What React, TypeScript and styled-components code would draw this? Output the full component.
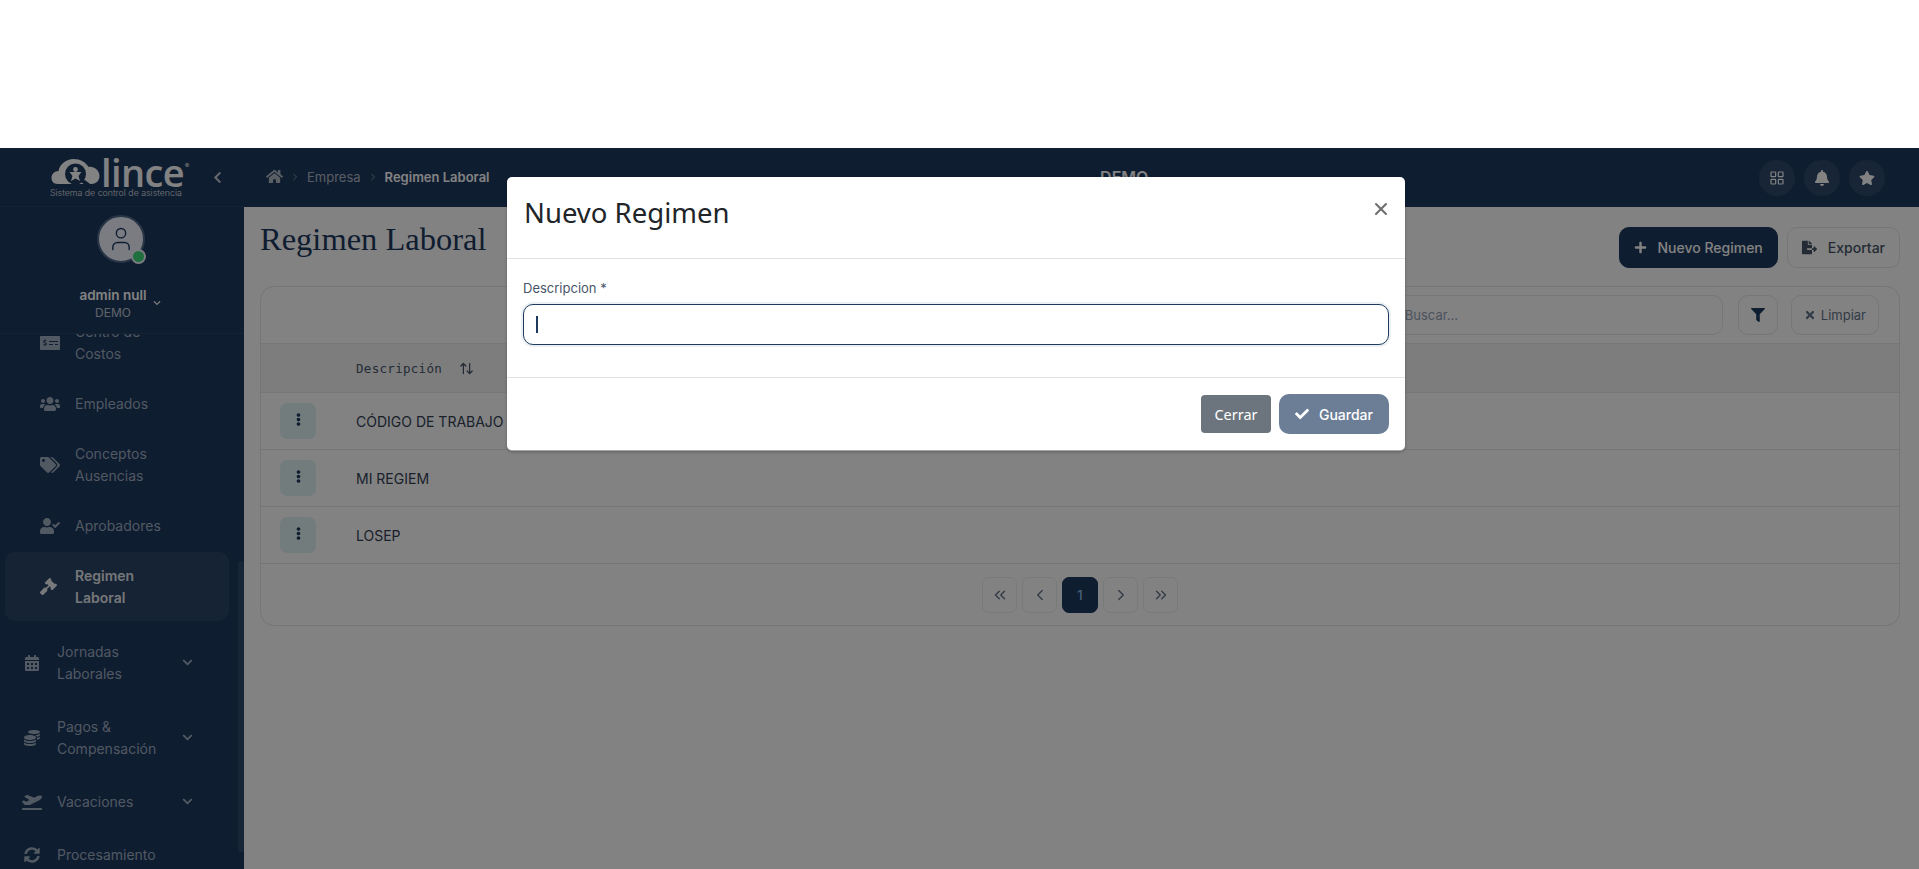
import { ReactNode } from "react";
import styled, { createGlobalStyle } from "styled-components";
import {
  FaBell,
  FaCalendarAlt,
  FaCheck,
  FaChevronDown,
  FaChevronLeft,
  FaCoins,
  FaEllipsisV,
  FaFileExport,
  FaFilter,
  FaGavel,
  FaHome,
  FaMoneyCheckAlt,
  FaPlaneDeparture,
  FaPlus,
  FaStar,
  FaSyncAlt,
  FaTags,
  FaTimes,
  FaUserCheck,
  FaUsers,
} from "react-icons/fa";
import {
  ArrowUpDown,
  ChevronLeft,
  ChevronRight,
  ChevronsLeft,
  ChevronsRight,
  LayoutGrid,
  User,
  X,
} from "lucide-react";

const NAVY = "#1e3a5f";

const GlobalStyle = createGlobalStyle`
  * { box-sizing: border-box; }
  html, body { margin: 0; padding: 0; background: #fff; overflow: hidden; }
  body { font-family: Inter, "Liberation Sans", sans-serif; }
`;

const TopBlank = styled.div`
  height: 148px;
  background: #fff;
`;

const Shell = styled.div`
  position: relative;
  height: 721px;
  display: grid;
  grid-template-columns: 244px 1fr;
  background: #fff;
`;

const Sidebar = styled.aside`
  display: flex;
  flex-direction: column;
  min-height: 0;
  background: ${NAVY};
  color: #fff;
`;

const Brand = styled.div`
  height: 59px;
  flex: none;
  display: flex;
  align-items: center;
  padding: 0 0 0 50px;
  border-bottom: 1px solid rgba(255, 255, 255, 0.06);
`;

const LogoBlock = styled.div`
  width: 141px;
  display: flex;
  flex-direction: column;
`;

const LogoRow = styled.div`
  display: flex;
  align-items: flex-end;
  height: 30px;
`;

const LogoWord = styled.span`
  font-family: "Open Sans", sans-serif;
  font-weight: 600;
  font-size: 38px;
  line-height: 30px;
  letter-spacing: -0.6px;
`;

const LogoMark = styled.sup`
  font-size: 6px;
  line-height: 1;
  align-self: flex-start;
  margin: 6px 0 0 1px;
`;

const LogoTag = styled.span`
  font-size: 8.8px;
  line-height: 10px;
  margin-top: 1px;
  white-space: nowrap;
  opacity: 0.85;
  font-weight: 300;
`;

const Collapse = styled.span`
  margin-left: 20px;
  display: flex;
  font-size: 13px;
  opacity: 0.75;
`;

const Profile = styled.div`
  height: 127px;
  flex: none;
  padding-top: 8px;
  display: flex;
  flex-direction: column;
  align-items: center;
  border-bottom: 1px solid rgba(255, 255, 255, 0.06);
`;

const Avatar = styled.div`
  position: relative;
  width: 48px;
  height: 48px;
  margin-right: 3px;
  border-radius: 50%;
  background: #f1f1ff;
  border: 2px solid #50688a;
  color: ${NAVY};
  display: flex;
  align-items: center;
  justify-content: center;
`;

const OnlineDot = styled.span`
  position: absolute;
  right: -3px;
  bottom: -3px;
  width: 15px;
  height: 15px;
  border-radius: 50%;
  background: #3fdc7c;
  border: 2px solid #f1f1ff;
`;

const ProfileText = styled.div`
  position: relative;
  margin-top: 23px;
  margin-right: 18px;
  text-align: center;
`;

const ProfileName = styled.div`
  font-size: 13.5px;
  line-height: 18px;
  font-weight: 600;
`;

const ProfileOrg = styled.div`
  font-size: 12px;
  line-height: 18px;
  opacity: 0.7;
`;

const ProfileCaret = styled.span`
  position: absolute;
  left: calc(100% + 6px);
  top: 13px;
  display: flex;
  font-size: 8px;
  opacity: 0.9;
`;

const Menu = styled.nav`
  position: relative;
  flex: 1;
  min-height: 0;
  overflow: hidden;
`;

const MenuList = styled.div`
  margin-top: -26px;
  padding: 0 15px 0 5px;
  display: flex;
  flex-direction: column;
`;

const MenuItem = styled.div<{ $sub?: boolean; $active?: boolean; $gap?: number }>`
  display: flex;
  align-items: center;
  padding: ${(p) => (p.$sub ? "12.5px 12px 12.5px 35px" : "12.5px 14px 12.5px 15px")};
  margin-bottom: ${(p) => p.$gap ?? 3}px;
  border-radius: 10px;
  background: ${(p) => (p.$active ? "rgba(255,255,255,0.06)" : "transparent")};
  font-size: 14px;
  line-height: 22px;
  font-weight: ${(p) => (p.$active ? 600 : 400)};
  color: ${(p) => (p.$active ? "rgba(255,255,255,0.9)" : "rgba(203,213,225,0.75)")};
`;

const MenuIcon = styled.span<{ $sub?: boolean }>`
  width: 30px;
  flex: none;
  display: flex;
  justify-content: ${(p) => (p.$sub ? "flex-start" : "center")};
  font-size: ${(p) => (p.$sub ? 20 : 16)}px;
  margin-left: ${(p) => (p.$sub ? 0 : -3)}px;
  margin-right: ${(p) => (p.$sub ? 5 : 10)}px;
`;

const MenuLabel = styled.span`
  flex: 1;
  max-width: 120px;
`;

const MenuCaret = styled.span`
  margin-left: auto;
  margin-right: 22px;
  display: flex;
  font-size: 11px;
`;

const ScrollThumb = styled.div`
  position: absolute;
  right: 0;
  top: 227px;
  width: 6px;
  height: 291px;
  border-radius: 3px;
  background: rgba(255, 255, 255, 0.08);
`;

const Main = styled.main`
  display: flex;
  flex-direction: column;
  min-width: 0;
`;

const Topbar = styled.header`
  height: 59px;
  flex: none;
  display: flex;
  align-items: center;
  background: ${NAVY};
  color: #fff;
  padding: 0 34px 2px 22px;
`;

const Crumbs = styled.div`
  display: flex;
  align-items: center;
  font-size: 13px;
  color: rgba(255, 255, 255, 0.65);
`;

const CrumbSep = styled.span`
  display: flex;
  margin: 0 6px;
  opacity: 0.7;
`;

const CrumbCurrent = styled.span`
  color: #fff;
  font-weight: 600;
`;

const OrgTitle = styled.div`
  flex: 1;
  text-align: center;
  font-weight: 600;
  font-size: 16px;
`;

const TopActions = styled.div`
  display: flex;
  gap: 9px;
  margin-bottom: -2px;
`;

const RoundAction = styled.span`
  width: 36px;
  height: 36px;
  border-radius: 50%;
  background: rgba(255, 255, 255, 0.08);
  display: flex;
  align-items: center;
  justify-content: center;
  font-size: 16px;
`;

const Content = styled.div`
  flex: 1;
  padding: 0 19px 0 16px;
  background: #fff;
`;

const PageHead = styled.div`
  height: 79px;
  display: flex;
  align-items: flex-start;
  justify-content: space-between;
`;

const PageTitle = styled.h1`
  margin: 12px 0 0 0;
  font-family: "Liberation Serif", serif;
  font-weight: 400;
  font-size: 32.5px;
  line-height: 40px;
  color: ${NAVY};
`;

const PageActions = styled.div`
  display: flex;
  gap: 9px;
  margin-top: 20px;
`;

const HeadButton = styled.button<{ $primary?: boolean }>`
  height: 41px;
  display: flex;
  align-items: center;
  gap: ${(p) => (p.$primary ? 10 : 11)}px;
  padding: 0 14px;
  border-radius: 10px;
  border: 1px solid ${(p) => (p.$primary ? NAVY : "#e5e7eb")};
  background: ${(p) => (p.$primary ? NAVY : "#fff")};
  color: ${(p) => (p.$primary ? "#fff" : "#475569")};
  font-family: inherit;
  font-size: 14px;
  font-weight: 500;
`;

const Card = styled.section`
  height: 340px;
  border: 1px solid #e5e7eb;
  border-radius: 14px;
  overflow: hidden;
  background: #fff;
`;

const Toolbar = styled.div`
  height: 56px;
  display: flex;
  align-items: center;
  justify-content: flex-end;
  gap: 13px;
  padding-right: 20px;
`;

const SearchBox = styled.div`
  width: 349px;
  height: 40px;
  margin-right: 2px;
  padding-left: 30px;
  display: flex;
  align-items: center;
  border: 1px solid #e5e7eb;
  border-radius: 10px;
  font-size: 13px;
  color: #94a3b8;
`;

const ToolButton = styled.button`
  height: 40px;
  min-width: 39px;
  padding: 0 12px;
  display: flex;
  align-items: center;
  justify-content: center;
  gap: 5px;
  background: #fff;
  border: 1px solid #e5e7eb;
  border-radius: 10px;
  font-family: inherit;
  font-size: 13px;
  color: #64748b;
`;

const Table = styled.table`
  width: 100%;
  border-collapse: collapse;
`;

const HeadCell = styled.th`
  height: 49px;
  padding: 0;
  background: #f5f5f6;
  border-top: 1px solid #e5e7eb;
  border-bottom: 1px solid #e5e7eb;
  text-align: left;
  font-family: "DejaVu Sans Mono", monospace;
  font-weight: 400;
  font-size: 12.5px;
  letter-spacing: 0.3px;
  color: #475569;
`;

const SortIcon = styled.span`
  display: inline-flex;
  margin-left: 17px;
  vertical-align: -3px;
`;

const ActionCell = styled.td`
  width: 95px;
  height: 57px;
  padding: 0 0 0 19px;
  border-bottom: 1px solid #e5e7eb;
`;

const TextCell = styled.td`
  padding: 0;
  border-bottom: 1px solid #e5e7eb;
  font-size: 14px;
  color: #334155;
`;

const RowButton = styled.span`
  width: 36px;
  height: 36px;
  border-radius: 7px;
  background: #e2f3f3;
  display: flex;
  align-items: center;
  justify-content: center;
  color: ${NAVY};
  font-size: 13px;
  padding-bottom: 3px;
`;

const Pager = styled.div`
  padding-top: 13px;
  display: flex;
  justify-content: center;
  gap: 5px;
`;

const PageButton = styled.span<{ $active?: boolean }>`
  width: ${(p) => (p.$active ? 36 : 35)}px;
  height: 36px;
  border-radius: 7px;
  display: flex;
  align-items: center;
  justify-content: center;
  border: 1px solid ${(p) => (p.$active ? NAVY : "#eceef0")};
  background: ${(p) => (p.$active ? NAVY : "#fff")};
  color: ${(p) => (p.$active ? "#8fc0e8" : "#64748b")};
  font-size: 13px;
  font-weight: 500;
`;

const Backdrop = styled.div`
  position: absolute;
  inset: 0;
  padding-top: 29px;
  background: rgba(0, 0, 0, 0.49);
  display: flex;
  justify-content: center;
  align-items: flex-start;
`;

const Modal = styled.div`
  width: 898px;
  margin-left: -7px;
  height: 274px;
  display: flex;
  flex-direction: column;
  background: #fff;
  border-radius: 5px;
  border-bottom: 1px solid rgba(0, 0, 0, 0.35);
  box-shadow: 0 1px 3px rgba(0, 0, 0, 0.25);
`;

const ModalHead = styled.div`
  height: 82px;
  flex: none;
  display: flex;
  align-items: flex-start;
  justify-content: space-between;
  padding: 16px 14px 0 17px;
  border-bottom: 1px solid #dee2e6;
`;

const ModalTitle = styled.h5`
  margin: 0;
  font-family: "Noto Sans", sans-serif;
  font-weight: 400;
  font-size: 27.5px;
  line-height: 39px;
  color: #212529;
`;

const CloseIcon = styled.span`
  display: flex;
  margin-top: 6px;
  color: #6f6f6f;
`;

const ModalBody = styled.div`
  height: 119px;
  flex: none;
  padding: 20px 16px 0;
  border-bottom: 1px solid #dee2e6;
`;

const FieldLabel = styled.label`
  display: block;
  font-size: 13px;
  line-height: 18px;
  color: #475569;
`;

const InputWrap = styled.div`
  position: relative;
  margin-top: 7px;
`;

const TextInput = styled.input`
  display: block;
  width: 100%;
  height: 41px;
  border: 1px solid ${NAVY};
  border-radius: 10px;
  outline: none;
  box-shadow: 0 0 0 2px rgba(30, 58, 95, 0.08);
  caret-color: transparent;
  background: #fff;
`;

const InputCaret = styled.span`
  position: absolute;
  left: 13px;
  top: 12px;
  width: 2px;
  height: 17px;
  background: ${NAVY};
`;

const ModalFoot = styled.div`
  flex: 1;
  display: flex;
  align-items: center;
  justify-content: flex-end;
  gap: 8px;
  padding: 0 16px 0 0;
`;

const CloseButton = styled.button`
  width: 70px;
  height: 38px;
  border: none;
  border-radius: 4px;
  background: #6c757d;
  color: #fff;
  font-family: "Noto Sans", sans-serif;
  font-size: 14.5px;
`;

const SaveButton = styled.button`
  width: 110px;
  height: 40px;
  display: flex;
  align-items: center;
  justify-content: center;
  gap: 10px;
  border: none;
  border-radius: 10px;
  background: ${NAVY};
  opacity: 0.65;
  color: #fff;
  font-family: inherit;
  font-size: 14px;
  font-weight: 500;
`;

type NavEntry = {
  label: ReactNode;
  icon: ReactNode;
  sub?: boolean;
  active?: boolean;
  caret?: boolean;
  gap?: number;
};

const nav: NavEntry[] = [
  { label: <>Centro de<br />Costos</>, icon: <FaMoneyCheckAlt />, sub: true },
  { label: "Empleados", icon: <FaUsers />, sub: true },
  { label: <>Conceptos<br />Ausencias</>, icon: <FaTags />, sub: true },
  { label: "Aprobadores", icon: <FaUserCheck />, sub: true },
  { label: <>Regimen<br />Laboral</>, icon: <FaGavel size={17} />, sub: true, active: true, gap: 7 },
  { label: <>Jornadas<br />Laborales</>, icon: <FaCalendarAlt />, caret: true, gap: 6 },
  { label: <>Pagos &amp;<br />Compensación</>, icon: <FaCoins />, caret: true, gap: 6 },
  { label: "Vacaciones", icon: <FaPlaneDeparture size={20} />, caret: true, gap: 6 },
  { label: "Procesamiento", icon: <FaSyncAlt />, gap: 6 },
];

const rows = ["CÓDIGO DE TRABAJO", "MI REGIEM", "LOSEP"];

const CloudLogo = () => (
  <svg width="51" height="30" viewBox="0 0 50 30">
    <path
      d="M7 27 C3 27 1 24 1 21 C1 17 4 14 8 14 C9 7 16 2 23 2 C30 2 35 5 38 10 C43 9 49 13 49 19 C49 24 45 27 41 27 Z"
      fill="#fff"
    />
    <circle cx="25" cy="17" r="10.5" fill={NAVY} />
    <path d="M31 23 L42 31" stroke={NAVY} strokeWidth="4" />
    <circle cx="25" cy="12.5" r="2.4" fill="#fff" />
    <path d="M19 15 L31 15 L28 19 L29.5 24 L25 21.5 L20.5 24 L22 19 Z" fill="#fff" />
  </svg>
);

const App = () => {
  return (
    <>
      <GlobalStyle />
      <TopBlank />
      <Shell>
        <Sidebar>
          <Brand>
            <LogoBlock>
              <LogoRow>
                <CloudLogo />
                <LogoWord>lince</LogoWord>
                <LogoMark>®</LogoMark>
              </LogoRow>
              <LogoTag>Sistema de control de asistencia</LogoTag>
            </LogoBlock>
            <Collapse>
              <FaChevronLeft />
            </Collapse>
          </Brand>
          <Profile>
            <Avatar>
              <User size={28} strokeWidth={1.2} />
              <OnlineDot />
            </Avatar>
            <ProfileText>
              <ProfileName>admin null</ProfileName>
              <ProfileOrg>DEMO</ProfileOrg>
              <ProfileCaret>
                <FaChevronDown />
              </ProfileCaret>
            </ProfileText>
          </Profile>
          <Menu>
            <MenuList>
              {nav.map((item, i) => (
                <MenuItem key={i} $sub={item.sub} $active={item.active} $gap={item.gap}>
                  <MenuIcon $sub={item.sub}>{item.icon}</MenuIcon>
                  <MenuLabel>{item.label}</MenuLabel>
                  {item.caret && (
                    <MenuCaret>
                      <FaChevronDown />
                    </MenuCaret>
                  )}
                </MenuItem>
              ))}
            </MenuList>
            <ScrollThumb />
          </Menu>
        </Sidebar>
        <Main>
          <Topbar>
            <Crumbs>
              <FaHome size={17} />
              <CrumbSep>
                <ChevronRight size={12} />
              </CrumbSep>
              <span>Empresa</span>
              <CrumbSep>
                <ChevronRight size={12} />
              </CrumbSep>
              <CrumbCurrent>Regimen Laboral</CrumbCurrent>
            </Crumbs>
            <OrgTitle>DEMO</OrgTitle>
            <TopActions>
              <RoundAction>
                <LayoutGrid size={16} strokeWidth={1.8} />
              </RoundAction>
              <RoundAction>
                <FaBell />
              </RoundAction>
              <RoundAction>
                <FaStar />
              </RoundAction>
            </TopActions>
          </Topbar>
          <Content>
            <PageHead>
              <PageTitle>Regimen Laboral</PageTitle>
              <PageActions>
                <HeadButton $primary>
                  <FaPlus size={13} />
                  Nuevo Regimen
                </HeadButton>
                <HeadButton>
                  <FaFileExport size={15} />
                  Exportar
                </HeadButton>
              </PageActions>
            </PageHead>
            <Card>
              <Toolbar>
                <SearchBox>Buscar...</SearchBox>
                <ToolButton>
                  <FaFilter size={14} color="#1e3a5f" />
                </ToolButton>
                <ToolButton>
                  <FaTimes size={12} />
                  Limpiar
                </ToolButton>
              </Toolbar>
              <Table>
                <thead>
                  <tr>
                    <HeadCell />
                    <HeadCell>
                      Descripción
                      <SortIcon>
                        <ArrowUpDown size={15} strokeWidth={2} />
                      </SortIcon>
                    </HeadCell>
                  </tr>
                </thead>
                <tbody>
                  {rows.map((row) => (
                    <tr key={row}>
                      <ActionCell>
                        <RowButton>
                          <FaEllipsisV />
                        </RowButton>
                      </ActionCell>
                      <TextCell>{row}</TextCell>
                    </tr>
                  ))}
                </tbody>
              </Table>
              <Pager>
                <PageButton>
                  <ChevronsLeft size={18} strokeWidth={1.8} />
                </PageButton>
                <PageButton>
                  <ChevronLeft size={18} strokeWidth={1.8} />
                </PageButton>
                <PageButton $active>1</PageButton>
                <PageButton>
                  <ChevronRight size={18} strokeWidth={1.8} />
                </PageButton>
                <PageButton>
                  <ChevronsRight size={18} strokeWidth={1.8} />
                </PageButton>
              </Pager>
            </Card>
          </Content>
        </Main>
        <Backdrop>
          <Modal>
            <ModalHead>
              <ModalTitle>Nuevo Regimen</ModalTitle>
              <CloseIcon>
                <X size={20} strokeWidth={2.5} />
              </CloseIcon>
            </ModalHead>
            <ModalBody>
              <FieldLabel>Descripcion *</FieldLabel>
              <InputWrap>
                <TextInput />
                <InputCaret />
              </InputWrap>
            </ModalBody>
            <ModalFoot>
              <CloseButton>Cerrar</CloseButton>
              <SaveButton>
                <FaCheck size={14} />
                Guardar
              </SaveButton>
            </ModalFoot>
          </Modal>
        </Backdrop>
      </Shell>
    </>
  );
};

export default App;
